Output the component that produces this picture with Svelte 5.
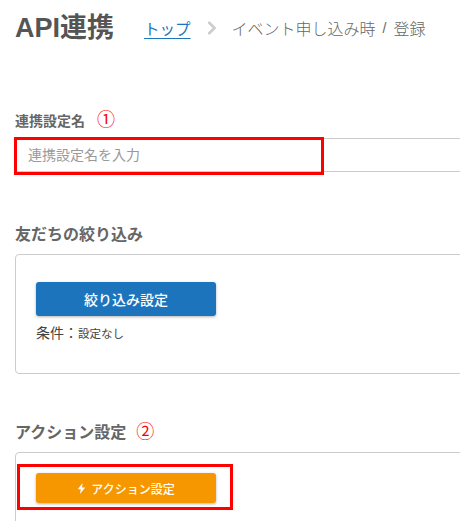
<script>
    let name = '';
</script>

<main>
    <header>
        <h1>API連携</h1>
        <nav>
            <a href="#top">トップ</a>
            <svg class="chev" width="12" height="16" viewBox="0 0 12 16"><path d="M2.5 2 L8.5 8 L2.5 14" fill="none" stroke="#ccc" stroke-width="2.6"/></svg>
            <span class="crumb">イベント申し込み時</span>
            <span class="slash">/</span>
            <span class="crumb">登録</span>
        </nav>
    </header>

    <section class="name">
        <div class="label-row">
            <label for="name">連携設定名</label>
            <span class="mark">①</span>
        </div>
        <div class="input-wrap">
            <input id="name" type="text" placeholder="連携設定名を入力" bind:value={name}>
            <div class="highlight input-mark"></div>
        </div>
    </section>

    <section class="filter">
        <h2>友だちの絞り込み</h2>
        <div class="card filter-card">
            <button class="btn blue">絞り込み設定</button>
            <p class="cond"><span>条件：</span><small>設定なし</small></p>
        </div>
    </section>

    <section class="action">
        <div class="label-row">
            <h2>アクション設定</h2>
            <span class="mark">②</span>
        </div>
        <div class="card action-card">
            <button class="btn orange">
                <svg width="9" height="11" viewBox="0 0 9 11"><path d="M5.6 0 L0.8 6.2 H3.8 L2.9 11 L8.2 4.4 H5 Z" fill="#fff"/></svg>
                アクション設定
            </button>
            <div class="highlight button-mark"></div>
        </div>
    </section>
</main>

<style>
    :global(body) {
        margin: 0;
        overflow: hidden;
        background: #fff;
    }

    main {
        width: 460px;
        height: 521px;
        overflow: hidden;
        padding-left: 15px;
        box-sizing: border-box;
        font-family: "Liberation Sans", "Noto Sans CJK JP", sans-serif;
        color: #555;
    }

    header {
        display: flex;
        align-items: center;
        height: 56px;
    }

    h1 {
        margin: 0;
        font-size: 27px;
        line-height: 56px;
        font-weight: 700;
        color: #555;
    }

    nav {
        display: flex;
        align-items: center;
        margin-left: 30px;
        font-size: 16px;
        font-weight: 300;
        color: #666;
    }

    nav a {
        font-size: 15.5px;
        font-weight: 400;
        color: #1c75bc;
        text-decoration: underline;
        text-underline-offset: 3px;
    }

    .chev {
        margin: 0 14px 0 15px;
    }

    .slash {
        margin: 0 7px;
        font-size: 14px;
    }

    .label-row {
        display: flex;
        align-items: center;
        gap: 12px;
    }

    .name {
        margin-top: 54px;
    }

    label {
        font-size: 14px;
        font-weight: 700;
        line-height: 20px;
        color: #666;
    }

    .mark {
        font-size: 18px;
        line-height: 22px;
        color: #f00;
        position: relative;
        top: -1px;
    }

    .input-wrap {
        position: relative;
        margin-top: 6px;
    }

    input {
        display: block;
        width: 460px;
        height: 34px;
        box-sizing: border-box;
        padding: 0 12px;
        border: 1px solid #ccc;
        border-radius: 3px;
        font: inherit;
        font-size: 14px;
        background: #fff;
    }

    input::placeholder {
        color: #999;
    }

    .highlight {
        position: absolute;
        border: 3px solid #f00;
        box-sizing: border-box;
        pointer-events: none;
    }

    .input-mark {
        left: -1px;
        top: -1px;
        width: 310px;
        height: 38px;
    }

    .filter {
        margin-top: 52px;
    }

    h2 {
        margin: 0;
        font-size: 16px;
        line-height: 22px;
        font-weight: 700;
        color: #666;
    }

    .card {
        position: relative;
        width: 460px;
        box-sizing: border-box;
        border: 1px solid #ccc;
        border-radius: 4px;
        padding: 27px 20px 0;
        margin-top: 8px;
    }

    .filter-card {
        height: 120px;
    }

    .btn {
        display: flex;
        align-items: center;
        justify-content: center;
        gap: 5px;
        width: 180px;
        height: 34px;
        border: none;
        border-radius: 3px;
        font: inherit;
        color: #fff;
        box-shadow: 0 1px 3px rgba(0, 0, 0, 0.3);
    }

    .blue {
        background: #1c75bc;
        font-size: 14px;
        font-weight: 500;
    }

    .cond {
        margin: 7px 0 0;
        font-size: 14px;
        line-height: 20px;
        color: #444;
    }

    .cond small {
        font-size: 11.5px;
    }

    .action {
        margin-top: 48px;
    }

    .action .label-row {
        gap: 10px;
    }

    .action-card {
        padding-top: 20px;
        height: 100px;
    }

    .orange {
        height: 30px;
        background: #f79700;
        font-size: 12px;
        font-weight: 500;
    }

    .button-mark {
        left: 1px;
        top: 11px;
        width: 216px;
        height: 46px;
    }
</style>
